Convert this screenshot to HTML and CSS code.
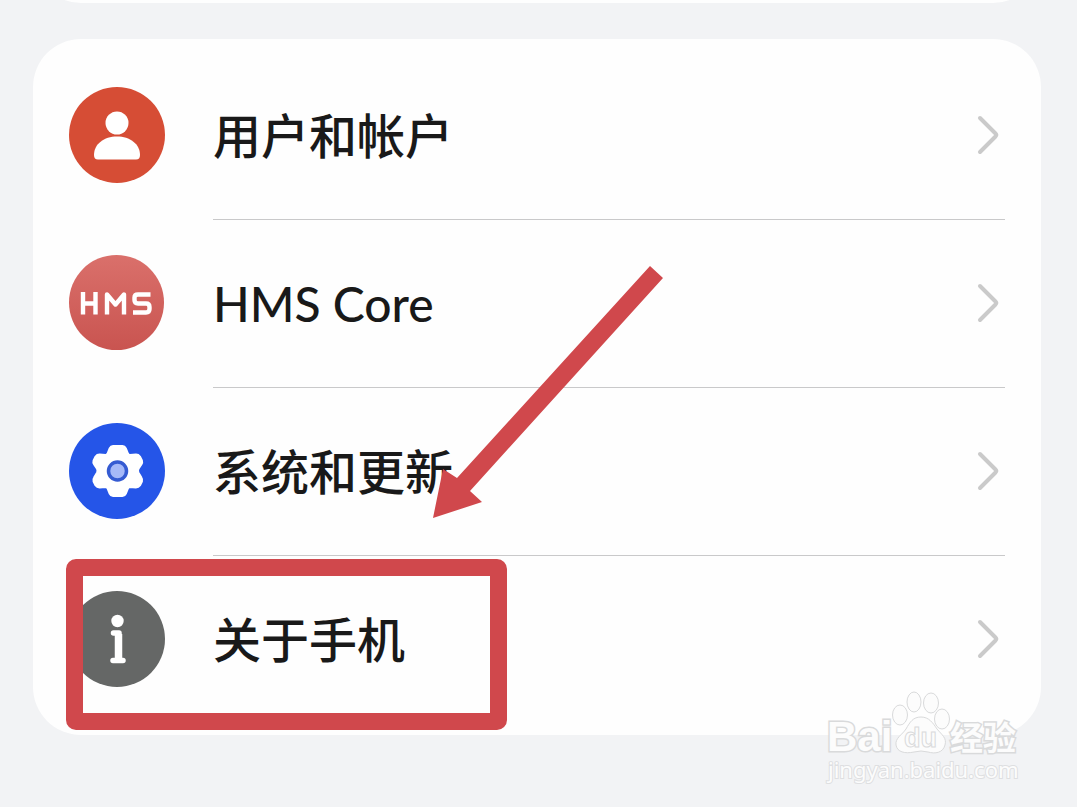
FILE: index.html
```html
<!DOCTYPE html>
<html lang="zh-CN">
<head>
<meta charset="utf-8">
<meta name="viewport" content="width=device-width, initial-scale=1">
<title>设置</title>
<link rel="stylesheet" href="styles.css">
</head>
<body>
<main class="settings">
  <div class="card card-previous"></div>
  <nav class="card">
    <a class="row" href="#users">
      <svg class="icon" viewBox="0 0 96 96" aria-hidden="true">
        <circle cx="48" cy="48" r="48" fill="#d64d35"/>
        <circle cx="48" cy="36" r="11.500" fill="#fff"/>
        <path d="M25 68C25 57 35 49.500 48 49.500S71 57 71 68Q71 72.500 67 72.500H29Q25 72.500 25 68Z" fill="#fff"/>
      </svg>
      <span class="body"><span class="label">用户和帐户</span>
        <svg class="chevron" viewBox="0 0 24 42" aria-hidden="true"><path d="M3 4L18.500 19.500Q20 21 18.500 22.500L3 38"/></svg></span>
    </a>
    <a class="row" href="#hms">
      <svg class="icon" viewBox="0 0 96 96" aria-hidden="true">
        <defs><linearGradient id="hms-fill" x2="0" y2="1"><stop stop-color="#da706b"/><stop offset="1" stop-color="#c95450"/></linearGradient></defs>
        <circle cx="47.500" cy="47.500" r="47.500" fill="url(#hms-fill)"/>
        <g fill="none" stroke="#fff" stroke-width="4.400" stroke-linejoin="round">
          <path d="M14 37V59.500M26.500 37V59.500M14 48.500H26.500"/>
          <path d="M38 59.500V39.500L46.500 49.500L55 39.500V59.500"/>
          <path d="M81.500 39.500H69Q65.500 39.500 65.500 42.500V45Q65.500 48.500 69 48.500H77Q80.500 48.500 80.500 52V54Q80.500 57.500 77 57.500H64"/>
        </g>
      </svg>
      <span class="body"><span class="label">HMS Core</span>
        <svg class="chevron" viewBox="0 0 24 42" aria-hidden="true"><path d="M3 4L18.500 19.500Q20 21 18.500 22.500L3 38"/></svg></span>
    </a>
    <a class="row" href="#system">
      <svg class="icon" viewBox="0 0 96 96" aria-hidden="true">
        <circle cx="48" cy="48" r="48" fill="#2555e8"/>
        <path d="M44 24H53.500Q55 24 56 26L58 31Q59 33 61 33L67 32.500Q69 32.500 70 34L72 38Q72.500 39.500 71.500 41L68.500 45.500Q67.500 48 68.500 50L71.500 55Q72.500 56.500 72 58L70 62Q69 63.500 67 63.500L61 63Q59 63 58 65L56 70Q55 72 53.500 72H44Q42.500 72 41.500 70L39.500 65Q38.500 63 36.500 63L30.500 63.500Q28.500 63.500 27.500 62L25.500 58Q25 56.500 26 55L29 50Q30 48 29 45.500L26 41Q25 39.500 25.500 38L27.500 34Q28.500 32.500 30.500 32.500L36.500 33Q38.500 33 39.500 31L41.500 26Q42.500 24 44 24Z" fill="#fff" stroke="#fff" stroke-width="4" stroke-linejoin="round"/>
        <circle cx="48.500" cy="48" r="9" fill="#a6b9f8" stroke="#355bd2" stroke-width="3.500"/>
      </svg>
      <span class="body"><span class="label">系统和更新</span>
        <svg class="chevron" viewBox="0 0 24 42" aria-hidden="true"><path d="M3 4L18.500 19.500Q20 21 18.500 22.500L3 38"/></svg></span>
    </a>
    <a class="row" href="#about">
      <svg class="icon" viewBox="0 0 96 96" aria-hidden="true">
        <circle cx="48" cy="48" r="48" fill="#656766"/>
        <circle cx="48.500" cy="30" r="6.200" fill="#fff"/>
        <path d="M44.500 42H50V69.500M44 69.500H54" fill="none" stroke="#fff" stroke-width="5.500" stroke-linecap="round" stroke-linejoin="round"/>
        <path d="M49.500 43V68" stroke="#fff" stroke-width="7.500"/>
      </svg>
      <span class="body"><span class="label">关于手机</span>
        <svg class="chevron" viewBox="0 0 24 42" aria-hidden="true"><path d="M3 4L18.500 19.500Q20 21 18.500 22.500L3 38"/></svg></span>
      <span class="highlight"></span>
    </a>
    <svg class="arrow" viewBox="0 0 230 252" aria-hidden="true"><path d="M217 0L230 12L37 225L49 236L0 252L10 203L24 212Z" fill="#d0484c"/></svg>
  </nav>
  <svg class="watermark" viewBox="0 0 200 98" role="img" aria-label="Baidu 经验 jingyan.baidu.com">
    <g class="mark">
      <text x="3" y="59" class="brand">Bai</text>
      <ellipse cx="76" cy="23" rx="7.500" ry="10"/>
      <ellipse cx="90" cy="10" rx="7" ry="10"/>
      <ellipse cx="107" cy="11" rx="7.500" ry="10"/>
      <ellipse cx="118" cy="27" rx="7.500" ry="10"/>
      <path d="M97 25C105 25 109 31 113 37C118 43 123 46 121 53C119 61 111 62 104 60Q97 58 90 60C81 62 73 60 72 53C71 46 78 43 82 37C86 30 89 25 97 25Z"/>
      <text x="80" y="55" class="du">du</text>
      <text x="126" y="58" class="cn">经验</text>
    </g>
    <text x="4" y="86" class="site">jingyan.baidu.com</text>
  </svg>
</main>
</body>
</html>
```
FILE: styles.css
```css
* { box-sizing: border-box; }

body {
  margin: 0;
  background: #f2f3f5;
  color: #191919;
  font-family: Lato, "Noto Sans CJK SC", sans-serif;
}

.settings {
  position: relative;
  display: flow-root;
  min-height: 100vh;
  padding: 0 36px 72px 33px;
  overflow: hidden;
}

.card {
  position: relative;
  padding: 12px 36px;
  border-radius: 48px;
  background: #fefefe;
}

.card-previous {
  height: 96px;
  margin-top: -93px;
  margin-bottom: 36px;
}

.row {
  position: relative;
  display: flex;
  align-items: center;
  gap: 48px;
  height: 168px;
  color: inherit;
  text-decoration: none;
}

.icon {
  flex: none;
  width: 96px;
  height: 96px;
}

.body {
  display: flex;
  flex: 1;
  align-items: center;
  justify-content: space-between;
  height: 169px;
  margin-bottom: -1px;
  padding-right: 4px;
  border-bottom: 1px solid #c9c9ca;
}

.row:nth-of-type(4) .body { border-bottom-color: transparent; }

.label {
  padding-top: 2px;
  font-size: 48px;
  font-weight: 500;
  line-height: 72px;
}

.chevron {
  width: 24px;
  height: 42px;
  fill: none;
  stroke: #cacaca;
  stroke-width: 4;
  stroke-linecap: round;
}

.highlight {
  position: absolute;
  top: 4px;
  left: -3px;
  width: 441px;
  height: 171px;
  border: 17px solid #d0484c;
  border-radius: 10px;
}

.arrow {
  position: absolute;
  top: 227px;
  left: 400px;
  width: 230px;
  height: 252px;
}

.watermark {
  position: absolute;
  right: 53px;
  bottom: 17px;
  width: 200px;
  height: 98px;
  overflow: visible;
}

.mark {
  fill: #fcfcfc;
  stroke: #d9dadb;
  stroke-width: 1;
}

.brand {
  font: bold 42px "Liberation Sans", sans-serif;
  stroke-width: 3px;
  paint-order: stroke;
}

.du {
  font: bold 27px "Liberation Sans", sans-serif;
}

.cn {
  font: bold 33px "Noto Sans CJK SC", sans-serif;
  stroke-width: 3px;
  paint-order: stroke;
}

.site {
  font: 22px "Noto Sans", sans-serif;
  fill: #fcfcfc;
  stroke: #dedfe1;
  stroke-width: 2px;
  paint-order: stroke;
}
```
